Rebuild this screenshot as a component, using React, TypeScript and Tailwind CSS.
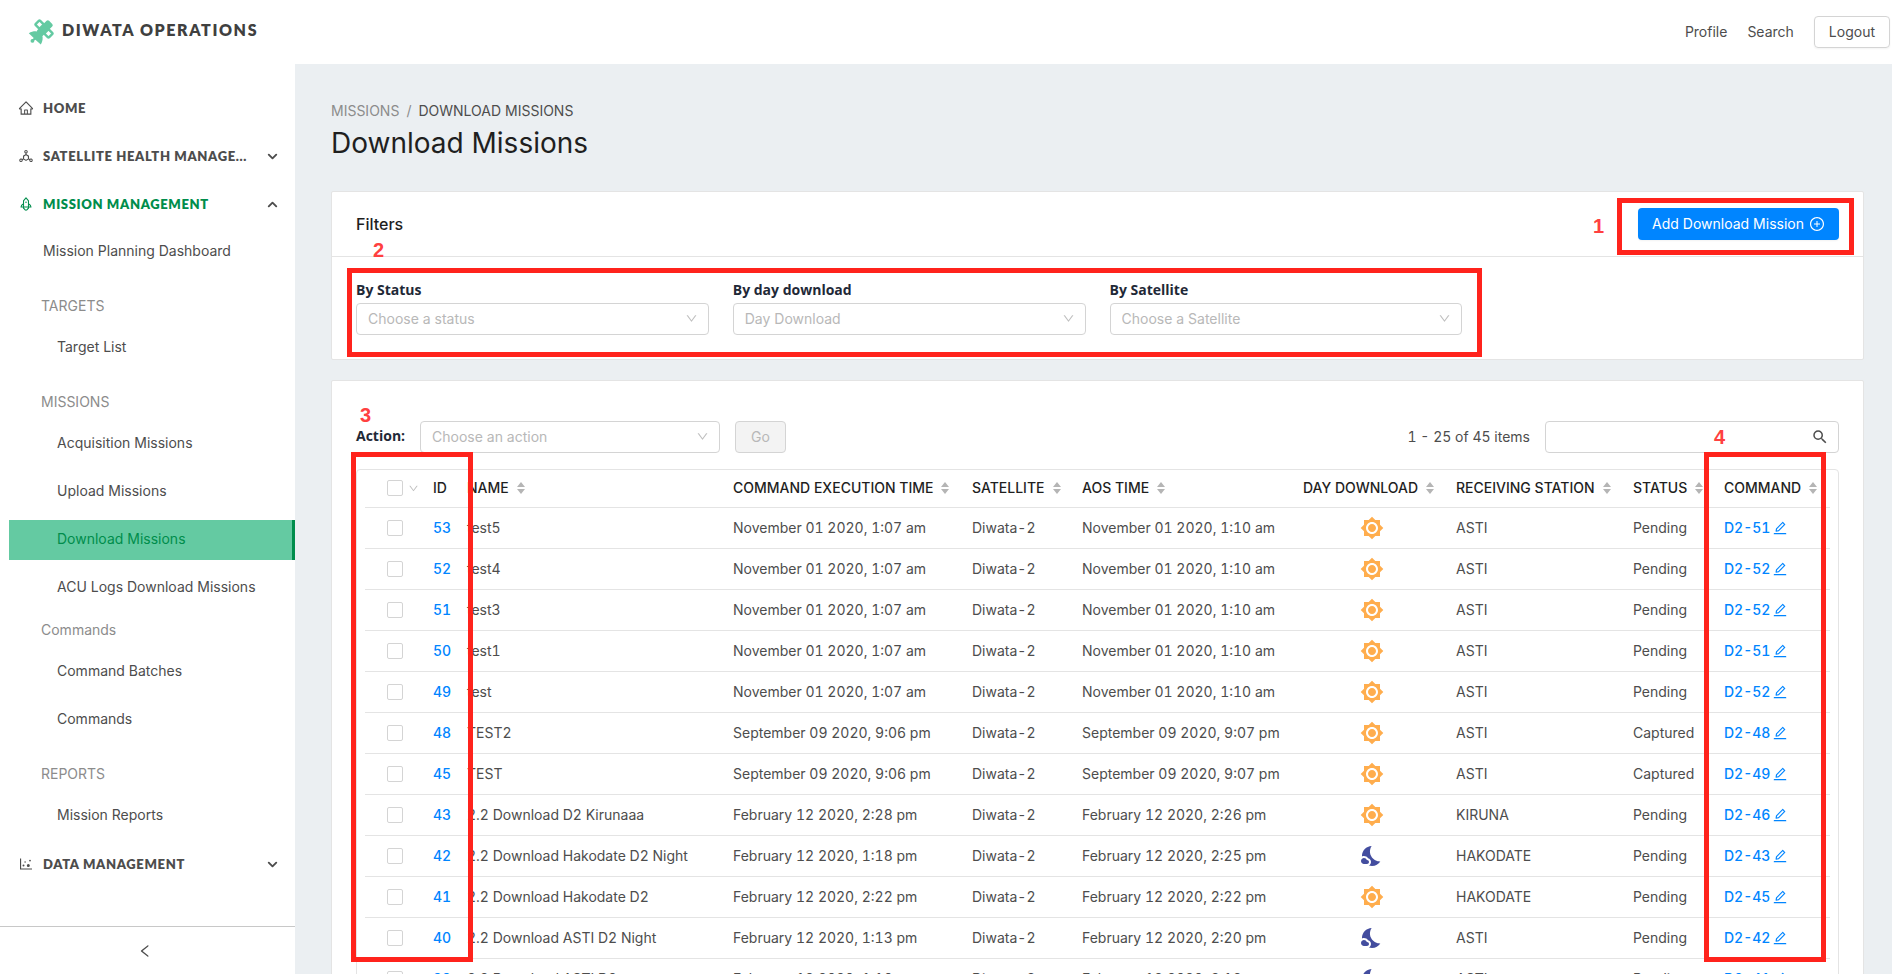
import type { ReactNode } from "react";
import { ChevronDown, ChevronUp } from "lucide-react";
import {
  AiOutlineDeploymentUnit,
  AiOutlineDotChart,
  AiOutlineDown,
  AiOutlineEdit,
  AiOutlineHome,
  AiOutlineLeft,
  AiOutlinePlusCircle,
  AiOutlineRocket,
} from "react-icons/ai";
import { MdBrightness7, MdNightsStay, MdSearch } from "react-icons/md";

type Mission = {
  id: number;
  name: string;
  execution: string;
  aos: string;
  day: boolean;
  station: string;
  status: string;
  command: string;
};

const NOV_EXEC = "November 01 2020, 1:07 am";
const NOV_AOS = "November 01 2020, 1:10 am";
const SEP_EXEC = "September 09 2020, 9:06 pm";
const SEP_AOS = "September 09 2020, 9:07 pm";

const missions: Mission[] = [
  { id: 53, name: "test5", execution: NOV_EXEC, aos: NOV_AOS, day: true, station: "ASTI", status: "Pending", command: "D2-51" },
  { id: 52, name: "test4", execution: NOV_EXEC, aos: NOV_AOS, day: true, station: "ASTI", status: "Pending", command: "D2-52" },
  { id: 51, name: "test3", execution: NOV_EXEC, aos: NOV_AOS, day: true, station: "ASTI", status: "Pending", command: "D2-52" },
  { id: 50, name: "test1", execution: NOV_EXEC, aos: NOV_AOS, day: true, station: "ASTI", status: "Pending", command: "D2-51" },
  { id: 49, name: "test", execution: NOV_EXEC, aos: NOV_AOS, day: true, station: "ASTI", status: "Pending", command: "D2-52" },
  { id: 48, name: "TEST2", execution: SEP_EXEC, aos: SEP_AOS, day: true, station: "ASTI", status: "Captured", command: "D2-48" },
  { id: 45, name: "TEST", execution: SEP_EXEC, aos: SEP_AOS, day: true, station: "ASTI", status: "Captured", command: "D2-49" },
  { id: 43, name: "2.2 Download D2 Kirunaaa", execution: "February 12 2020, 2:28 pm", aos: "February 12 2020, 2:26 pm", day: true, station: "KIRUNA", status: "Pending", command: "D2-46" },
  { id: 42, name: "2.2 Download Hakodate D2 Night", execution: "February 12 2020, 1:18 pm", aos: "February 12 2020, 2:25 pm", day: false, station: "HAKODATE", status: "Pending", command: "D2-43" },
  { id: 41, name: "2.2 Download Hakodate D2", execution: "February 12 2020, 2:22 pm", aos: "February 12 2020, 2:22 pm", day: true, station: "HAKODATE", status: "Pending", command: "D2-45" },
  { id: 40, name: "2.2 Download ASTI D2 Night", execution: "February 12 2020, 1:13 pm", aos: "February 12 2020, 2:20 pm", day: false, station: "ASTI", status: "Pending", command: "D2-42" },
  { id: 39, name: "2.2 Download ASTI D2", execution: "February 12 2020, 1:10 pm", aos: "February 12 2020, 2:18 pm", day: false, station: "ASTI", status: "Pending", command: "D2-41" },
];

function Logo() {
  return (
    <svg viewBox="0 0 26 26" className="size-[26px] shrink-0 text-[#64caa2]" aria-hidden="true">
      <rect x="8.5" y="5" width="16.5" height="8" rx="1.8" fill="currentColor" transform="rotate(-45 17 9)" />
      <g fill="#ffffff" stroke="currentColor" strokeWidth="2.4">
        <rect x="8.4" y="2.4" width="6.2" height="6.2" rx="1" transform="rotate(-45 11.5 5.5)" />
        <rect x="17.4" y="11.4" width="6.2" height="6.2" rx="1" transform="rotate(-45 20.5 14.5)" />
      </g>
      <path
        fill="currentColor"
        d="M0.8 14.2C4 12.3 7.8 11.8 10.6 12.8L14.2 16.2C15.2 19 14.6 22.5 12.8 25.6L7.4 20.8 6.3 21.6A1.9 1.9 0 1 1 4.9 20.1L5.7 19Z"
      />
    </svg>
  );
}

function NavSection({ icon, label, active, open }: { icon: ReactNode; label: string; active?: boolean; open?: boolean }) {
  return (
    <button
      type="button"
      className={`flex h-10 w-full items-center gap-[9px] pl-[18px] text-left font-['Lato',sans-serif] text-[13px] font-extrabold tracking-wider ${
        active ? "text-[#008d4c]" : "text-[#4d4d4d]"
      }`}
    >
      <span className="shrink-0">{icon}</span>
      <span className="w-[213px] whitespace-nowrap">{label}</span>
      {open === undefined ? null : open ? (
        <ChevronUp size={15} strokeWidth={3} className="shrink-0 text-[#4d4d4d]" />
      ) : (
        <ChevronDown size={15} strokeWidth={3} className="shrink-0 text-[#4d4d4d]" />
      )}
    </button>
  );
}

function NavItem({ label, selected, top }: { label: string; selected?: boolean; top?: boolean }) {
  return (
    <a
      href="#"
      aria-current={selected ? "page" : undefined}
      className={`ml-[9px] flex h-10 items-center pb-0.5 text-sm ${top ? "pl-[34px]" : "pl-12"} ${
        selected ? "border-r-3 border-[#008d4c] bg-[#64caa2] text-[#008d4c]" : "text-[#4d4d4d]"
      }`}
    >
      {label}
    </a>
  );
}

function NavGroup({ title, tight, children }: { title: string; tight?: boolean; children: ReactNode }) {
  return (
    <section className={tight ? "mt-1" : "mt-4"}>
      <h2 className="flex h-10 items-center pb-1 pl-[41px] text-sm text-[#8c8c8c]">{title}</h2>
      <div className="flex flex-col gap-2">{children}</div>
    </section>
  );
}

function Sidebar() {
  return (
    <aside className="flex w-[295px] shrink-0 flex-col bg-white">
      <nav className="flex min-h-0 flex-1 flex-col gap-2 overflow-y-auto pt-6 [scrollbar-width:none]">
        <NavSection icon={<AiOutlineHome size={16} />} label="HOME" />
        <NavSection icon={<AiOutlineDeploymentUnit size={16} />} label="SATELLITE HEALTH MANAGE..." open={false} />
        <NavSection icon={<AiOutlineRocket size={16} />} label="MISSION MANAGEMENT" active open />
        <div>
          <NavItem label="Mission Planning Dashboard" top />
          <NavGroup title="TARGETS">
            <NavItem label="Target List" />
          </NavGroup>
          <NavGroup title="MISSIONS">
            <NavItem label="Acquisition Missions" />
            <NavItem label="Upload Missions" />
            <NavItem label="Download Missions" selected />
            <NavItem label="ACU Logs Download Missions" />
          </NavGroup>
          <NavGroup title="Commands" tight>
            <NavItem label="Command Batches" />
            <NavItem label="Commands" />
          </NavGroup>
          <NavGroup title="REPORTS">
            <NavItem label="Mission Reports" />
          </NavGroup>
        </div>
        <NavSection icon={<AiOutlineDotChart size={16} />} label="DATA MANAGEMENT" open={false} />
      </nav>
      <button
        type="button"
        aria-label="Collapse menu"
        className="flex h-12 shrink-0 items-center justify-center border-t border-[#c8c8c8] pr-1.5 text-[#4d4d4d]"
      >
        <AiOutlineLeft size={16} />
      </button>
    </aside>
  );
}

function Select({ id, placeholder }: { id: string; placeholder: string }) {
  return (
    <div className="relative w-full">
      <select
        id={id}
        className="h-8 w-full appearance-none rounded border border-[#d4d4d4] bg-white px-[11px] text-sm text-[#b8b8b8]"
      >
        <option>{placeholder}</option>
      </select>
      <AiOutlineDown size={13} className="pointer-events-none absolute top-[9px] right-[11px] text-[#bfbfbf]" />
    </div>
  );
}

function Filter({ id, label, placeholder }: { id: string; label: string; placeholder: string }) {
  return (
    <div>
      <label
        htmlFor={id}
        className="block font-['Open_Sans',sans-serif] text-sm leading-[26px] font-bold text-[#1f2937]"
      >
        {label}
      </label>
      <Select id={id} placeholder={placeholder} />
    </div>
  );
}

function Sorter() {
  return (
    <svg viewBox="0 0 8 12" className="h-3 w-2 shrink-0 fill-[#b5b5b5]" aria-hidden="true">
      <path d="M4 0 8 5H0zM4 12 8 7H0z" />
    </svg>
  );
}

function HeadCell({ children }: { children: string }) {
  return (
    <th className="p-0 text-left font-medium">
      <button type="button" className="flex items-center gap-2 px-2 whitespace-nowrap">
        {children}
        <Sorter />
      </button>
    </th>
  );
}

const box = "pointer-events-none absolute border-[5px] border-[#ff231c]";
const mark = "pointer-events-none absolute text-xl leading-5 font-bold text-[#ff4040] font-['Liberation_Sans',sans-serif]";
const checkbox = "block size-4 appearance-none rounded-xs border border-[#d4d4d4] bg-white";

function MissionTable() {
  return (
    <div className="relative mt-4 rounded border border-[#e4e4e4] px-2">
      <table className="w-full table-fixed tabular-nums">
        <colgroup>
          <col className="w-[60px]" />
          <col className="w-[34px]" />
          <col className="w-[266px]" />
          <col className="w-[239px]" />
          <col className="w-[110px]" />
          <col className="w-[221px]" />
          <col className="w-[153px]" />
          <col className="w-[177px]" />
          <col className="w-[91px]" />
          <col className="w-[114px]" />
        </colgroup>
        <thead className="text-[#1f1f1f]">
          <tr className="h-[37px] border-b border-[#e4e4e4]">
            <th className="p-0">
              <div className="flex items-center gap-[5px] pl-[22px]">
                <input type="checkbox" aria-label="Select all missions" className={checkbox} />
                <AiOutlineDown size={11} className="shrink-0 text-[#bfbfbf]" />
              </div>
            </th>
            <th className="px-2 py-0 text-left font-medium">ID</th>
            <HeadCell>NAME</HeadCell>
            <HeadCell>COMMAND EXECUTION TIME</HeadCell>
            <HeadCell>SATELLITE</HeadCell>
            <HeadCell>AOS TIME</HeadCell>
            <HeadCell>DAY DOWNLOAD</HeadCell>
            <HeadCell>RECEIVING STATION</HeadCell>
            <HeadCell>STATUS</HeadCell>
            <HeadCell>COMMAND</HeadCell>
          </tr>
        </thead>
        <tbody>
          {missions.map((m) => (
            <tr key={m.id} className="h-[41px] border-b border-[#e4e4e4] whitespace-nowrap">
              <td className="p-0 pl-[22px]">
                <input type="checkbox" aria-label={`Select mission ${m.id}`} className={checkbox} />
              </td>
              <td className="px-2 py-0">
                <a href="#" className="font-medium text-[#0085ff]">
                  {m.id}
                </a>
              </td>
              <td className="px-2 py-0">{m.name}</td>
              <td className="px-2 py-0">{m.execution}</td>
              <td className="px-2 py-0">Diwata-2</td>
              <td className="px-2 py-0">{m.aos}</td>
              <td className="px-2 py-0">
                {m.day ? (
                  <MdBrightness7 size={24} className="mx-auto text-[#ffad4d]" />
                ) : (
                  <MdNightsStay size={24} className="mx-auto text-[#434d9f]" />
                )}
              </td>
              <td className="px-2 py-0">{m.station}</td>
              <td className="px-2 py-0">{m.status}</td>
              <td className="px-2 py-0">
                <a href="#" className="flex items-center gap-0.5 font-medium text-[#0085ff]">
                  {m.command}
                  <AiOutlineEdit size={16} />
                </a>
              </td>
            </tr>
          ))}
        </tbody>
      </table>
      <div className={`${box} -top-[18px] -left-[6px] h-[510px] w-[122px]`} />
      <div className={`${box} -top-[18px] right-3 h-[510px] w-[122px]`} />
    </div>
  );
}

export default function App() {
  return (
    <div className="flex h-screen flex-col overflow-hidden bg-[#ebeff2] font-['Inter',sans-serif] text-sm text-[#4d4d4d]">
      <header className="flex h-16 shrink-0 items-center justify-between bg-white pr-0.5 pl-7">
        <a href="#" className="flex items-center gap-2">
          <Logo />
          <span className="pb-1 font-['Lato',sans-serif] text-base font-extrabold tracking-widest text-[#404040]">
            DIWATA OPERATIONS
          </span>
        </a>
        <div className="flex items-center gap-5">
          <a href="#">Profile</a>
          <a href="#">Search</a>
          <button type="button" className="h-8 rounded border border-[#d4d4d4] px-3.5 shadow-xs">
            Logout
          </button>
        </div>
      </header>

      <div className="flex min-h-0 flex-1">
        <Sidebar />
        <main className="min-w-0 flex-1 overflow-y-auto pt-9 pr-7 pl-9 [scrollbar-width:none]">
          <nav aria-label="Breadcrumb" className="flex gap-[7px] leading-[22px]">
            <a href="#" className="text-[#8c8c8c]">
              MISSIONS
            </a>
            <span className="text-[#8c8c8c]">/</span>
            <span>DOWNLOAD MISSIONS</span>
          </nav>
          <h1 className="text-[28px] leading-[42px] text-[#1f1f1f]">Download Missions</h1>

          <section className="mt-[27px] rounded-xs border border-[#e4e4e4] bg-white">
            <div className="flex h-[65px] items-center justify-between border-b border-[#e4e4e4] px-6">
              <h2 className="text-base font-medium text-[#1f1f1f]">Filters</h2>
              <div className="relative">
                <button
                  type="button"
                  className="flex h-8 items-center gap-[5px] rounded bg-[#0085ff] px-3.5 text-white shadow-xs"
                >
                  Add Download Mission
                  <AiOutlinePlusCircle size={16} />
                </button>
                <div className={`${box} -top-[10px] -right-[15px] -bottom-[15px] -left-[21px]`} />
                <span className={`${mark} top-2 right-[235px]`}>1</span>
              </div>
            </div>
            <div className="relative px-6 pt-5 pb-6">
              <div className="grid grid-cols-4 gap-6">
                <Filter id="filter-status" label="By Status" placeholder="Choose a status" />
                <Filter id="filter-day" label="By day download" placeholder="Day Download" />
                <Filter id="filter-satellite" label="By Satellite" placeholder="Choose a Satellite" />
              </div>
              <div className={`${box} top-[11px] bottom-0.5 left-[15px] w-[calc(75%-13px)]`} />
              <span className={`${mark} -top-[17px] left-[41px]`}>2</span>
            </div>
          </section>

          <section className="relative mt-5 rounded-xs border border-[#e4e4e4] bg-white px-6 pt-10">
            <div className="flex items-center justify-between">
              <div className="flex items-center">
                <label
                  htmlFor="action"
                  className="w-16 pb-0.5 font-['Open_Sans',sans-serif] font-bold text-[#1f2937]"
                >
                  Action:
                </label>
                <div className="w-[300px]">
                  <Select id="action" placeholder="Choose an action" />
                </div>
                <button
                  type="button"
                  disabled
                  className="ml-[15px] h-8 rounded border border-[#d4d4d4] bg-[#f3f3f3] px-[15px] text-[#b8b8b8]"
                >
                  Go
                </button>
              </div>
              <div className="flex items-center gap-[15px] tabular-nums">
                <span>1 - 25 of 45 items</span>
                <div className="relative w-[294px]">
                  <input
                    type="text"
                    aria-label="Search missions"
                    className="h-8 w-full rounded border border-[#d4d4d4] bg-white pr-9 pl-[11px]"
                  />
                  <MdSearch size={18} className="pointer-events-none absolute top-[7px] right-2.5" />
                </div>
              </div>
            </div>
            <MissionTable />
            <span className={`${mark} top-6 left-7`}>3</span>
            <span className={`${mark} top-[46px] right-[138px]`}>4</span>
          </section>
        </main>
      </div>
    </div>
  );
}
